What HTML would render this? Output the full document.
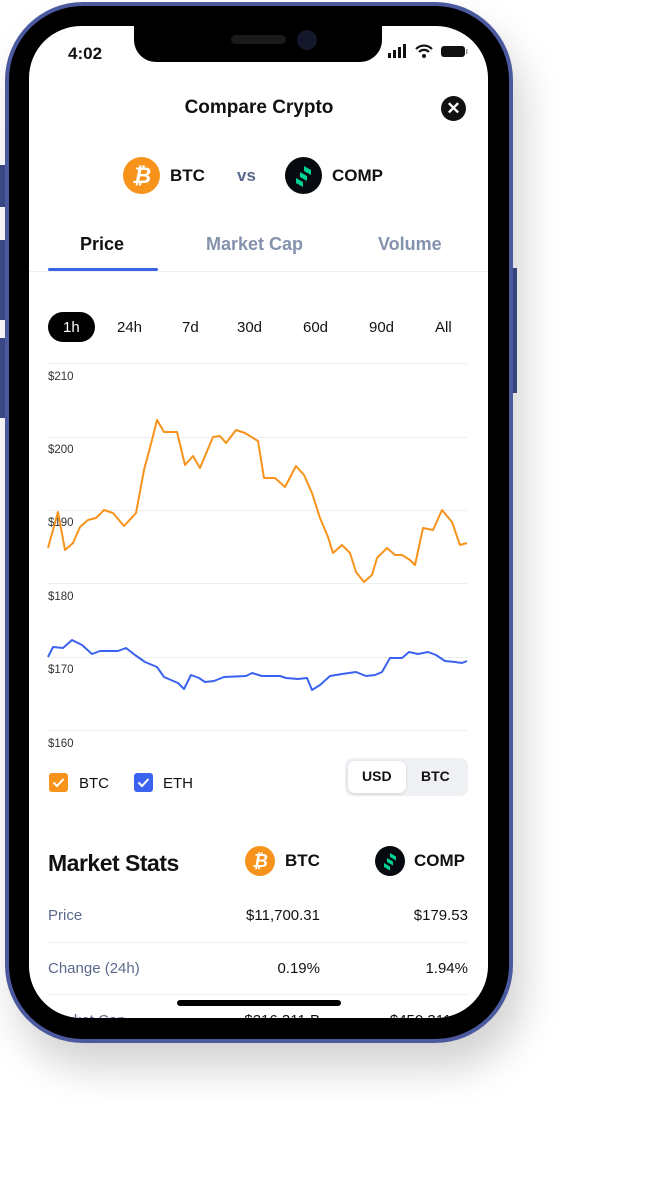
<!DOCTYPE html>
<html><head><meta charset="utf-8"><style>
*{margin:0;padding:0;box-sizing:border-box}
body{width:653px;height:1181px;background:#fff;font-family:"Liberation Sans",sans-serif;position:relative;overflow:hidden}
.frame{position:absolute;left:5px;top:2px;width:508px;height:1041px;border-radius:78px;background:#4b5a9e;box-shadow:10px 25px 40px rgba(0,0,0,.18)}
.bezel{position:absolute;left:4px;top:4px;width:500px;height:1033px;border-radius:74px;background:#000}
.screen{position:absolute;left:29px;top:26px;width:459px;height:992px;border-radius:52px;background:#fff;overflow:hidden}
.notch{position:absolute;left:134px;top:20px;width:248px;height:42px;background:#000;border-radius:0 0 22px 22px}
.abs{position:absolute}
.btn{position:absolute;background:#3d4c8c;width:6px}
</style></head><body>
<div class="btn" style="left:0;top:165px;height:42px"></div>
<div class="btn" style="left:0;top:240px;height:80px"></div>
<div class="btn" style="left:0;top:338px;height:80px"></div>
<div class="btn" style="left:511px;top:268px;height:125px"></div>
<div class="frame"><div class="bezel"></div></div>
<div class="screen">
<div class="abs" style="left:19px;top:986px;font-size:15px;color:#5b6a8c">Market Cap</div>
<div class="abs" style="left:171px;width:120px;text-align:right;top:986px;font-size:15px;color:#111">$216,311 B</div>
<div class="abs" style="left:319px;width:120px;text-align:right;top:986px;font-size:15px;color:#111">$450,311 M</div>
</div>
<div class="notch"></div>
<div class="abs" style="left:231px;top:35px;width:55px;height:9px;border-radius:5px;background:#1a1a1a"></div>
<div class="abs" style="left:297px;top:30px;width:20px;height:20px;border-radius:50%;background:#15182a"></div>
<div class="abs" style="left:68px;top:44px;font-size:17px;font-weight:bold;color:#111">4:02</div>
<svg class="abs" style="left:386px;top:43px" width="82" height="18">
<rect x="2" y="10" width="3" height="5" fill="#111"/><rect x="7" y="7" width="3" height="8" fill="#111"/><rect x="12" y="4" width="3" height="11" fill="#111"/><rect x="17" y="1" width="3" height="14" fill="#111"/>
<path d="M30 6a11 11 0 0 1 16 0M33 9a7 7 0 0 1 10 0" stroke="#111" stroke-width="2.2" fill="none"/><circle cx="38" cy="13" r="2" fill="#111"/>
<rect x="55" y="3" width="24" height="11" rx="3" fill="#111"/><rect x="80" y="6" width="1.5" height="5" fill="#999"/>
</svg>
<div class="abs" style="left:0;width:518px;top:97px;text-align:center;font-size:19px;font-weight:bold;color:#111">Compare Crypto</div>
<div class="abs" style="left:441px;top:96px;width:25px;height:25px;border-radius:50%;background:#111;color:#fff;font-size:17px;text-align:center;line-height:25px;font-weight:bold">✕</div>
<div class="abs" style="left:123px;top:157px;width:37px;height:37px;border-radius:50%;background:#f7931a;color:#fff;font-weight:bold;font-size:22px;text-align:center;line-height:37px;font-style:italic">₿</div>
<div class="abs" style="left:170px;top:166px;font-size:17px;font-weight:bold;color:#111">BTC</div>
<div class="abs" style="left:237px;top:166px;font-size:17px;color:#5b6a8c;font-weight:bold">vs</div>
<div class="abs" style="left:285px;top:157px;width:37px;height:37px;border-radius:50%;background:#070a0e"></div>
<svg class="abs" style="left:285px;top:157px" width="37" height="37"><path d="M11 21l7 4v5l-7-4zM15 15l7 4v5l-7-4zM19 9l7 4v5l-7-4z" fill="#00d395"/></svg>
<div class="abs" style="left:332px;top:166px;font-size:17px;font-weight:bold;color:#111">COMP</div>
<div class="abs" style="left:80px;top:234px;font-size:18px;font-weight:bold;color:#111">Price</div>
<div class="abs" style="left:206px;top:234px;font-size:18px;font-weight:bold;color:#8592ad">Market Cap</div>
<div class="abs" style="left:378px;top:234px;font-size:18px;font-weight:bold;color:#8592ad">Volume</div>
<div class="abs" style="left:48px;top:268px;width:110px;height:3px;border-radius:2px;background:#3b63e6"></div>
<div class="abs" style="left:29px;top:271px;width:459px;height:1px;background:#eef0f4"></div>
<div class="abs" style="left:48px;top:312px;width:47px;height:30px;border-radius:15px;background:#000"></div>
<div class="abs" style="top:319px;font-size:15px;color:#111;left:0;width:653px">
<span class="abs" style="left:63px;color:#fff">1h</span><span class="abs" style="left:117px">24h</span><span class="abs" style="left:182px">7d</span><span class="abs" style="left:237px">30d</span><span class="abs" style="left:303px">60d</span><span class="abs" style="left:369px">90d</span><span class="abs" style="left:435px">All</span></div>
<svg class="abs" style="left:0;top:0" width="653" height="800">
<g stroke="#eceef2" stroke-width="1"><line x1="48" x2="467" y1="363.5" y2="363.5"/><line x1="48" x2="467" y1="437.5" y2="437.5"/><line x1="48" x2="467" y1="510.5" y2="510.5"/><line x1="48" x2="467" y1="583.5" y2="583.5"/><line x1="48" x2="467" y1="657.5" y2="657.5"/><line x1="48" x2="467" y1="730.5" y2="730.5"/></g>
<g font-size="11.5" fill="#333" font-family="Liberation Sans"><text x="48" y="380">$210</text><text x="48" y="453">$200</text><text x="48" y="526">$190</text><text x="48" y="600">$180</text><text x="48" y="673">$170</text><text x="48" y="747">$160</text></g>
<polyline fill="none" stroke="#f7931a" stroke-width="2" stroke-linejoin="round" points="48,548 58,512 65,550 73,543 80,527 88,520 96,518 104,510 113,513 124,526 136,513 144,470 152,440 157,420 164,432 177,432 185,465 193,456 200,468 213,437 220,436 226,443 236,430 245,433 258,441 264,478 275,478 285,487 296,466 304,475 312,493 320,518 328,537 333,553 342,545 350,553 356,572 364,582 372,575 377,558 387,548 395,555 402,555 410,560 415,565 423,528 433,530 442,510 452,522 460,545 467,543"/>
<polyline fill="none" stroke="#3b63f0" stroke-width="2" stroke-linejoin="round" points="48,657 53,647 63,648 72,640 82,645 92,654 100,651 118,651 126,648 135,655 145,662 157,667 164,677 178,683 184,689 191,675 199,678 205,682 214,681 224,677 246,676 252,673 262,676 280,676 286,678 298,679 307,678 312,690 320,685 330,676 342,674 356,672 366,676 375,675 382,672 390,658 402,658 409,652 418,654 428,652 436,655 445,661 455,662 462,663 467,661"/>
</svg>
<svg class="abs" style="left:48px;top:772px" width="150" height="22">
<rect x="1" y="1" width="19" height="19" rx="3" fill="#f7931a"/><path d="M5.5 10.5l3.5 3.5 6.5-7" stroke="#fff" stroke-width="2" fill="none"/>
<rect x="86" y="1" width="19" height="19" rx="3" fill="#3b63f0"/><path d="M90.5 10.5l3.5 3.5 6.5-7" stroke="#fff" stroke-width="2" fill="none"/></svg>
<div class="abs" style="left:79px;top:775px;font-size:15px;color:#111">BTC</div>
<div class="abs" style="left:163px;top:775px;font-size:15px;color:#111">ETH</div>
<div class="abs" style="left:345px;top:758px;width:123px;height:38px;border-radius:8px;background:#eef0f4"></div>
<div class="abs" style="left:348px;top:761px;width:58px;height:32px;border-radius:7px;background:#fff;box-shadow:0 1px 3px rgba(0,0,0,.12)"></div>
<div class="abs" style="left:362px;top:768px;font-size:14px;font-weight:bold;color:#111">USD</div>
<div class="abs" style="left:421px;top:768px;font-size:14px;font-weight:bold;color:#111">BTC</div>
<div class="abs" style="left:48px;top:850px;font-size:23px;font-weight:bold;color:#111;letter-spacing:-0.5px">Market Stats</div>
<div class="abs" style="left:245px;top:846px;width:30px;height:30px;border-radius:50%;background:#f7931a;color:#fff;font-weight:bold;font-size:18px;text-align:center;line-height:30px;font-style:italic">₿</div>
<div class="abs" style="left:285px;top:851px;font-size:17px;font-weight:bold;color:#111">BTC</div>
<div class="abs" style="left:375px;top:846px;width:30px;height:30px;border-radius:50%;background:#070a0e"></div>
<svg class="abs" style="left:375px;top:846px" width="30" height="30"><path d="M9 17l6 3.5v4l-6-3.5zM12 12l6 3.5v4l-6-3.5zM15 7l6 3.5v4l-6-3.5z" fill="#00d395"/></svg>
<div class="abs" style="left:414px;top:851px;font-size:17px;font-weight:bold;color:#111">COMP</div>
<div class="abs" style="left:48px;top:907px;font-size:15px;color:#5b6a8c">Price</div>
<div class="abs" style="left:200px;width:120px;text-align:right;top:907px;font-size:15px;color:#111">$11,700.31</div>
<div class="abs" style="left:348px;width:120px;text-align:right;top:907px;font-size:15px;color:#111">$179.53</div>
<div class="abs" style="left:48px;top:942px;width:420px;height:1px;background:#eef0f4"></div>
<div class="abs" style="left:48px;top:960px;font-size:15px;color:#5b6a8c">Change (24h)</div>
<div class="abs" style="left:200px;width:120px;text-align:right;top:960px;font-size:15px;color:#111">0.19%</div>
<div class="abs" style="left:348px;width:120px;text-align:right;top:960px;font-size:15px;color:#111">1.94%</div>
<div class="abs" style="left:48px;top:994px;width:420px;height:1px;background:#eef0f4"></div>
<div class="abs" style="left:177px;top:1000px;width:164px;height:6px;border-radius:3px;background:#000"></div>
</body></html>
